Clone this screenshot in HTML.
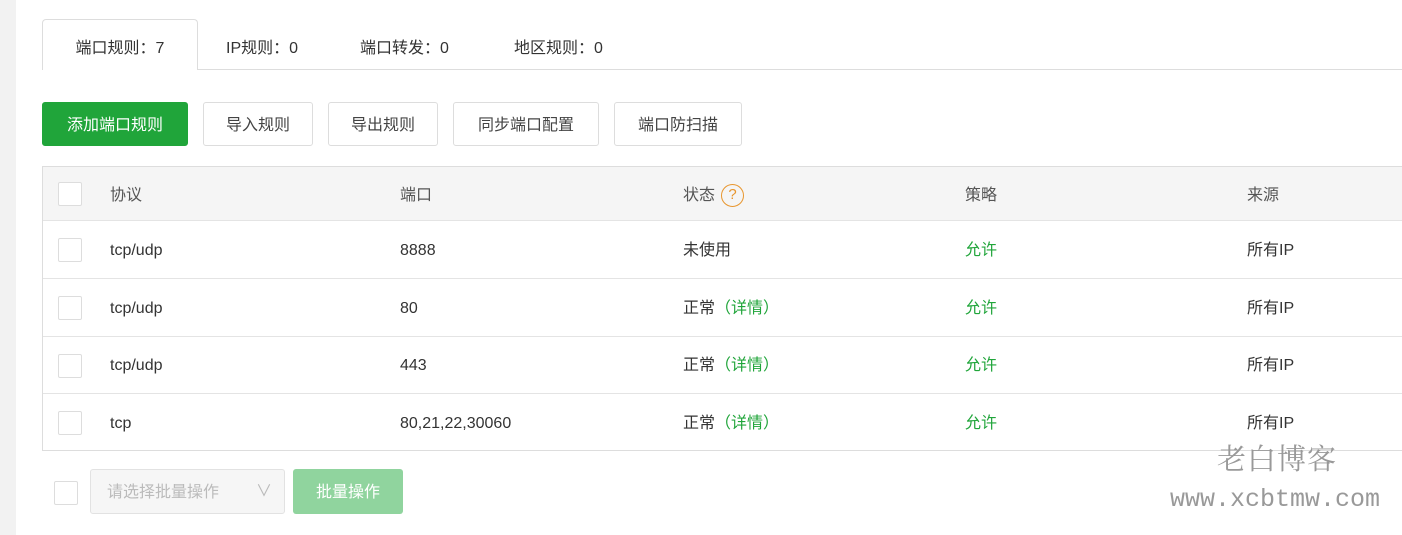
<!DOCTYPE html>
<html><head><meta charset="utf-8"><style>
*{box-sizing:border-box;margin:0;padding:0}
body{width:1402px;height:535px;background:#fff;font-family:"Liberation Sans","Noto Sans CJK SC",sans-serif;font-size:16px;color:#333;position:relative;overflow:hidden}
.side{position:absolute;left:0;top:0;width:16px;height:535px;background:#f2f2f2}
.tabline{position:absolute;left:42px;right:0;top:69px;border-top:1px solid #ddd}
.tab{position:absolute;top:30px;height:38px;line-height:38px;font-size:16px;color:#333;white-space:nowrap}
.tab.act{top:19px;left:42px;width:156px;height:51px;border:1px solid #ddd;border-bottom:none;border-radius:4px 4px 0 0;background:#fff;text-align:center;line-height:58px}
.btn{position:absolute;top:102px;height:44px;border:1px solid #ddd;border-radius:3px;background:#fff;text-align:center;line-height:45px;font-size:16px;color:#444}
.green{background:#20a53a;border-color:#20a53a;color:#fff}
.table{position:absolute;left:42px;top:166px;width:1370px;height:285px;border:1px solid #ddd}
.row{position:absolute;left:0;right:0;border-bottom:1px solid #e4e4e4}
.cb{position:absolute;left:15px;width:24px;height:24px;border:1px solid #ddd;border-radius:2px;background:#fff}
.c{position:absolute;top:50%;margin-top:-10px;height:22px;line-height:22px;font-size:16px;color:#333;white-space:nowrap}
.g{color:#20a53a}
.q{display:inline-block;width:23px;height:23px;border:1.5px solid #e8962e;border-radius:50%;color:#e8962e;font-size:15px;text-align:center;line-height:20px;margin-left:6px;vertical-align:top;margin-top:-1px}
.wm{position:absolute;color:#999;white-space:nowrap}
</style></head><body>
<div class="side"></div>
<div class="tabline"></div>
<div class="tab act">端口规则：7</div>
<div class="tab" style="left:226px">IP规则：0</div>
<div class="tab" style="left:360px">端口转发：0</div>
<div class="tab" style="left:514px">地区规则：0</div>

<div class="btn green" style="left:42px;width:146px">添加端口规则</div>
<div class="btn" style="left:203px;width:110px">导入规则</div>
<div class="btn" style="left:328px;width:110px">导出规则</div>
<div class="btn" style="left:453px;width:146px">同步端口配置</div>
<div class="btn" style="left:614px;width:128px">端口防扫描</div>

<div class="table">
 <div class="row" style="top:0;height:54px;background:#f5f5f5">
  <div class="cb" style="top:15px"></div>
  <div class="c" style="left:67px;color:#555;margin-top:-9px">协议</div>
  <div class="c" style="left:357px;color:#555;margin-top:-9px">端口</div>
  <div class="c" style="left:640px;color:#555;margin-top:-9px">状态<span class="q">?</span></div>
  <div class="c" style="left:922px;color:#555;margin-top:-9px">策略</div>
  <div class="c" style="left:1204px;color:#555;margin-top:-9px">来源</div>
 </div>
 <div class="row" style="top:54px;height:58px">
  <div class="cb" style="top:17px"></div>
  <div class="c" style="left:67px">tcp/udp</div>
  <div class="c" style="left:357px">8888</div>
  <div class="c" style="left:640px">未使用</div>
  <div class="c g" style="left:922px">允许</div>
  <div class="c" style="left:1204px">所有IP</div>
 </div>
 <div class="row" style="top:112px;height:58px">
  <div class="cb" style="top:17px"></div>
  <div class="c" style="left:67px">tcp/udp</div>
  <div class="c" style="left:357px">80</div>
  <div class="c" style="left:640px">正常<span class="g">（详情）</span></div>
  <div class="c g" style="left:922px">允许</div>
  <div class="c" style="left:1204px">所有IP</div>
 </div>
 <div class="row" style="top:170px;height:57px">
  <div class="cb" style="top:17px"></div>
  <div class="c" style="left:67px">tcp/udp</div>
  <div class="c" style="left:357px">443</div>
  <div class="c" style="left:640px">正常<span class="g">（详情）</span></div>
  <div class="c g" style="left:922px">允许</div>
  <div class="c" style="left:1204px">所有IP</div>
 </div>
 <div class="row" style="top:227px;height:57px;border-bottom:none">
  <div class="cb" style="top:17px"></div>
  <div class="c" style="left:67px">tcp</div>
  <div class="c" style="left:357px">80,21,22,30060</div>
  <div class="c" style="left:640px">正常<span class="g">（详情）</span></div>
  <div class="c g" style="left:922px">允许</div>
  <div class="c" style="left:1204px">所有IP</div>
 </div>
</div>

<div class="cb" style="left:54px;top:481px"></div>
<div style="position:absolute;left:90px;top:469px;width:195px;height:45px;border:1px solid #e2e2e2;border-radius:3px;background:#f6f6f6;color:#bbb;font-size:16px;line-height:45px;padding-left:16px">请选择批量操作<span style="position:absolute;right:12px;top:-1px;color:#bbb">∨</span></div>
<div style="position:absolute;left:293px;top:469px;width:110px;height:45px;border-radius:3px;background:#90d49e;color:#fff;font-size:16px;line-height:47px;text-align:center">批量操作</div>

<div class="wm" style="left:1217px;top:440px;font-size:29px;letter-spacing:1px;font-family:'Noto Serif CJK SC',serif;line-height:36px">老白博客</div>
<div class="wm" style="left:1170px;top:485px;font-size:25px;font-family:'Liberation Mono',monospace;line-height:30px">www.xcbtmw.com</div>
</body></html>
